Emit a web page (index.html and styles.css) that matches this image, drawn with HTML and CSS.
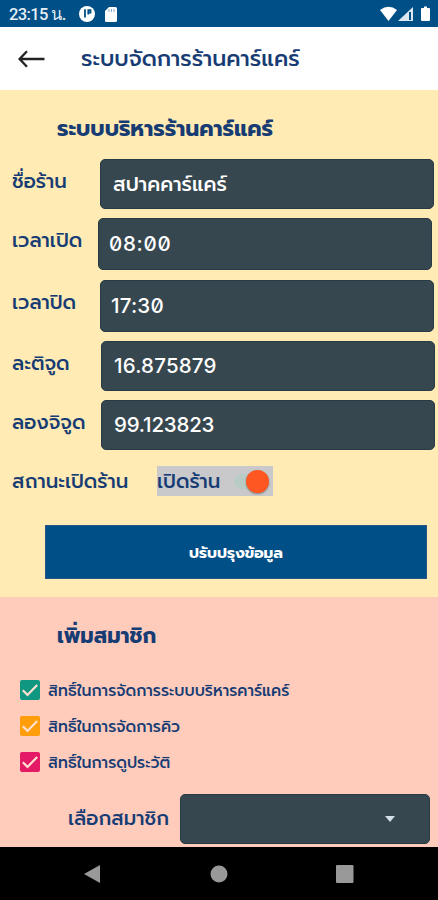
FILE: index.html
```html
<!DOCTYPE html>
<html lang="th">

<head>
    <meta charset="UTF-8">
    <meta name="viewport" content="width=device-width, initial-scale=1.0">
    <title>ระบบจัดการร้านคาร์แคร์</title>
    <link rel="stylesheet" href="styles.css">
</head>

<body>

    <!-- Phone status bar -->
    <div class="status-bar">
        <span class="clock">23:15 น.</span>
        <svg class="status-app" width="16" height="16" viewBox="0 0 16 16">
            <circle cx="8" cy="8" r="8" fill="#fff" />
            <path d="M6 3.200v8.300M9.300 8.500V4.200h2.200v2.300H9.300" fill="none" stroke="#004f86" stroke-width="1.800" />
        </svg>
        <svg class="status-card" width="12" height="15" viewBox="0 0 12 15">
            <path d="M4 0h6.500Q12 0 12 1.500v12q0 1.500-1.500 1.500h-9Q0 15 0 13.500V4z" fill="#fff" />
            <path d="M4 2v3M6.500 2v3M9 2v3" stroke="#8aa9c4" stroke-width="1" />
        </svg>
        <svg class="status-signal" width="50" height="16" viewBox="0 0 50 16">
            <path d="M0 4Q8.500-2.500 17 4L8.500 15z" fill="#fff" />
            <path d="M33 1v14H18z" fill="#dce7f0" />
            <path d="M30 6v8" stroke="#004f86" stroke-width="2" />
            <path d="M42 2h2V.5h3V2h2q1 0 1 1v11q0 1-1 1h-7q-1 0-1-1V3q0-1 1-1z" fill="#fff" />
        </svg>
    </div>

    <!-- App bar -->
    <div class="app-bar">
        <svg class="back" width="27" height="18" viewBox="0 0 27 18">
            <path d="M26.500 9H2M9 1.300L1.600 9 9 16.700" fill="none" stroke="#222" stroke-width="2.300" />
        </svg>
        <h1 class="app-title">ระบบจัดการร้านคาร์แคร์</h1>
    </div>

    <!-- Shop details -->
    <div class="shop">
        <h2 class="heading shop-heading">ระบบบริหารร้านคาร์แคร์</h2>

        <div class="row name">
            <span class="label">ชื่อร้าน</span>
            <div class="field">สปาคคาร์แคร์</div>
        </div>
        <div class="row open">
            <span class="label">เวลาเปิด</span>
            <div class="field number">08:00</div>
        </div>
        <div class="row close">
            <span class="label">เวลาปิด</span>
            <div class="field number">17:30</div>
        </div>
        <div class="row lat">
            <span class="label">ละติจูด</span>
            <div class="field number">16.875879</div>
        </div>
        <div class="row lng">
            <span class="label">ลองจิจูด</span>
            <div class="field number">99.123823</div>
        </div>

        <div class="shop-status">
            <span class="label">สถานะเปิดร้าน</span>
            <div class="switch">
                <span class="switch-text">เปิดร้าน</span>
                <span class="track"><span class="thumb"></span></span>
            </div>
        </div>

        <button class="update-button">ปรับปรุงข้อมูล</button>
    </div>

    <!-- Add a member -->
    <div class="member">
        <h2 class="heading member-heading">เพิ่มสมาชิก</h2>

        <div class="check green">
            <svg class="box" width="20" height="20" viewBox="0 0 20 20"><path d="M2.800 10.200l4.700 4.700L17.200 5" /></svg>
            <span class="check-text">สิทธิ์ในการจัดการระบบบริหารคาร์แคร์</span>
        </div>
        <div class="check orange">
            <svg class="box" width="20" height="20" viewBox="0 0 20 20"><path d="M2.800 10.200l4.700 4.700L17.200 5" /></svg>
            <span class="check-text">สิทธิ์ในการจัดการคิว</span>
        </div>
        <div class="check pink">
            <svg class="box" width="20" height="20" viewBox="0 0 20 20"><path d="M2.800 10.200l4.700 4.700L17.200 5" /></svg>
            <span class="check-text">สิทธิ์ในการดูประวัติ</span>
        </div>

        <div class="select-row">
            <span class="select-label">เลือกสมาชิก</span>
            <div class="select"><span class="caret"></span></div>
        </div>
    </div>

    <!-- Phone navigation buttons -->
    <div class="nav-bar">
        <svg width="16" height="18" viewBox="0 0 16 18"><path d="M16 0v18L0 9z" /></svg>
        <svg class="home" width="18" height="18" viewBox="0 0 18 18"><circle cx="9" cy="9" r="8.500" /></svg>
        <svg width="18" height="18" viewBox="0 0 18 18"><rect width="17.500" height="18" rx="1" /></svg>
    </div>

</body>

</html>
```
FILE: styles.css
```css
* {
    margin: 0;
    padding: 0;
    box-sizing: border-box;
}

body {
    width: 438px;
    height: 900px;
    overflow: hidden;
    font-family: Prompt, Kanit, Inter, "Noto Sans Thai", "Noto Sans", sans-serif;
    color: #173c74;
    white-space: nowrap;
}

/* Status bar */
.status-bar {
    display: flex;
    align-items: center;
    height: 27px;
    padding: 1px 8px 0 9px;
    background: #004f86;
    color: #e6eef5;
}

.clock {
    width: 70px;
    font-family: Roboto, sans-serif;
    font-size: 16.5px;
    font-weight: 500;
    letter-spacing: -0.6px;
}

.status-card {
    margin-left: 10px;
}

.status-signal {
    margin-left: auto;
}

/* App bar */
.app-bar {
    display: flex;
    align-items: center;
    height: 63px;
    padding-left: 18px;
    background: #fff;
}

.app-title {
    margin-left: 36px;
    font-size: 22px;
    font-weight: 500;
}

.heading {
    height: 32px;
    padding-left: 57px;
    font-size: 21px;
    font-weight: 700;
    line-height: 32px;
}

/* Shop details */
.shop {
    height: 507px;
    padding-top: 23px;
    background: #ffebb3;
}

.shop-heading {
    margin-bottom: 14px;
    font-size: 21.8px;
}

.row {
    display: flex;
    height: 50px;
    margin-bottom: 9px;
    padding-left: 12px;
}

.label {
    width: 88px;
    font-size: 19.7px;
    font-weight: 500;
    line-height: 46px;
}

.field {
    width: 334px;
    padding-left: 12px;
    border: 1px solid #263b47;
    border-radius: 5px;
    background: #37474f;
    color: #fff;
    font-size: 20px;
    font-weight: 500;
    line-height: 48px;
}

.number {
    font-family: Inter, sans-serif;
    font-size: 20.5px;
    font-feature-settings: "zero";
    letter-spacing: 0.2px;
}

.open,
.close {
    height: 52px;
}

.open {
    margin-bottom: 10px;
}

.open .label {
    width: 86px;
}

.open .field,
.close .field {
    padding-left: 10px;
    line-height: 50px;
}

.open .field {
    letter-spacing: 0.7px;
}

.lat .label,
.lng .label {
    width: 89px;
}

.lng .field {
    letter-spacing: -0.2px;
}

/* Open / closed switch */
.shop-status {
    display: flex;
    height: 30px;
    margin-top: 16px;
    padding-left: 12px;
}

.shop-status .label {
    width: 145px;
    line-height: 32px;
}

.switch {
    display: flex;
    align-items: center;
    justify-content: space-between;
    width: 116px;
    padding-right: 4px;
    background: #c9c9cb;
}

.switch-text {
    font-size: 19.7px;
    font-weight: 500;
}

.track {
    display: flex;
    align-items: center;
    justify-content: flex-end;
    width: 35px;
    height: 15px;
    border-radius: 8px;
    background: #b8ccc5;
}

.thumb {
    width: 23px;
    height: 23px;
    border-radius: 50%;
    background: #ff5722;
    box-shadow: 0 1px 2px rgba(0, 0, 0, 0.35);
}

.update-button {
    display: block;
    width: 382px;
    height: 54px;
    margin: 29px 0 0 45px;
    border: 1px solid #24588a;
    background: #004f86;
    color: #fff;
    font-family: inherit;
    font-size: 15.2px;
    font-weight: 700;
}

/* Add a member */
.member {
    height: 250px;
    padding-top: 23px;
    background: #ffccbc;
}

.member-heading {
    margin-bottom: 20px;
}

.check {
    display: flex;
    align-items: center;
    height: 36px;
    padding-left: 20px;
    font-size: 15.6px;
    font-weight: 500;
}

.check-text {
    padding-top: 2px;
}

.box {
    margin-right: 8px;
    border-radius: 2px;
}

.box path {
    fill: none;
    stroke: #ffe0d0;
    stroke-width: 2.2;
}

.green .box {
    background: #109781;
}

.orange .box {
    background: #ff9d0a;
}

.pink .box {
    background: #e51a67;
}

.select-row {
    display: flex;
    margin-top: 14px;
    padding-left: 68px;
}

.select-label {
    width: 112px;
    font-size: 19.7px;
    font-weight: 500;
    line-height: 50px;
}

.select {
    display: flex;
    align-items: center;
    justify-content: flex-end;
    width: 250px;
    height: 50px;
    padding-right: 34px;
    border: 1px solid #263b47;
    border-radius: 5px;
    background: #37474f;
}

.caret {
    border: 5px solid transparent;
    border-top: 6px solid #d3e0e8;
    border-bottom: 0;
}

/* Navigation buttons */
.nav-bar {
    display: flex;
    align-items: center;
    justify-content: space-between;
    height: 53px;
    padding: 0 84px;
    background: #000;
}

.nav-bar svg {
    fill: #999;
}

.home {
    margin-left: 2px;
}
```
